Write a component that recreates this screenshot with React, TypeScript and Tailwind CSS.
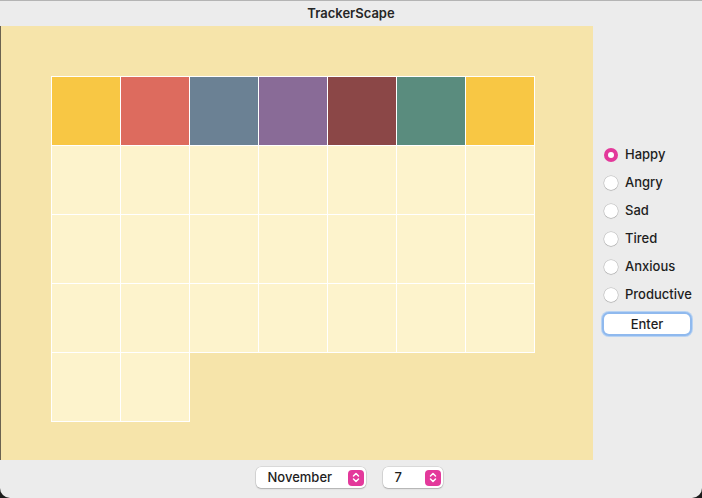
import React from "react";

// TrackerScape — mood tracker window (month grid + mood picker)

const topColors = ["#f8c744", "#dd6b5e", "#6b8194", "#896b97", "#8b4747", "#5a8c7e", "#f8c744"];
const moods = ["Happy", "Angry", "Sad", "Tired", "Anxious", "Productive"];

function Stepper() {
  return (
    <span className="flex items-center justify-center w-[16px] h-[16px] rounded-[4px] bg-[#e3399b]">
      <svg width="8" height="11" viewBox="0 0 8 11" fill="none" stroke="white" strokeWidth="1.5" strokeLinecap="round" strokeLinejoin="round">
        <path d="M1.5 4L4 1.5L6.5 4" />
        <path d="M1.5 7L4 9.5L6.5 7" />
      </svg>
    </span>
  );
}

function Select({ value, width }: { value: string; width: string }) {
  return (
    <div
      className={`${width} h-[21px] flex items-center justify-between pl-[12px] pr-[2px] bg-white rounded-[5px] shadow-[0_0_0_0.5px_rgba(0,0,0,0.15),0_1px_1.5px_rgba(0,0,0,0.2)] text-[13px] font-medium text-[#1e1e1e]`}
    >
      <span>{value}</span>
      <Stepper />
    </div>
  );
}

export default function App() {
  const days = Array.from({ length: 30 }, (_, i) => i);

  return (
    <div className="w-[702px] h-[498px] bg-[#1c1c1c] font-['Inter','Liberation_Sans',sans-serif]">
      <div className="w-full h-full flex flex-col bg-[#ececec] rounded-b-[10px] overflow-hidden">
        {/* Title bar */}
        <div className="h-[26px] shrink-0 border-t border-[#b4b4b4] flex items-center justify-center text-[13px] font-semibold text-[#262626]">
          TrackerScape
        </div>

        <div className="flex flex-1 min-h-0">
          {/* Calendar panel */}
          <div className="w-[593px] h-[434px] bg-[#f6e4aa] border-l border-[#6b6250] pl-[50px] pt-[50px]">
            <div className="grid grid-cols-[repeat(7,69px)] w-max border-l border-t border-white">
              {days.map((d) => (
                <div
                  key={d}
                  className="h-[69px] border-r border-b border-white"
                  style={{ backgroundColor: d < 7 ? topColors[d] : "#fdf3cc" }}
                />
              ))}
            </div>
          </div>

          {/* Mood picker */}
          <div className="flex-1 flex flex-col pl-[11px] pt-[115px]">
            {moods.map((m, i) => (
              <div key={m} className="h-[28px] flex items-center gap-[7px] text-[13px] font-medium text-[#1e1e1e]">
                {i === 0 ? (
                  <span className="w-[14px] h-[14px] rounded-full bg-[#e3399b] flex items-center justify-center">
                    <span className="w-[6px] h-[6px] rounded-full bg-white" />
                  </span>
                ) : (
                  <span className="w-[14px] h-[14px] rounded-full bg-white shadow-[0_0_0_0.5px_rgba(0,0,0,0.2),0_0.5px_1px_rgba(0,0,0,0.2)]" />
                )}
                <span>{m}</span>
              </div>
            ))}
            <button className="mt-[5px] w-[86px] h-[20px] rounded-[5px] bg-white text-[13px] font-medium text-[#1e1e1e] leading-none shadow-[0_0_0_2px_#8fb9ee,0_0_0_3px_#b8d3f3]">
              Enter
            </button>
          </div>
        </div>

        {/* Bottom selects */}
        <div className="h-[38px] shrink-0 flex items-center justify-center gap-[17px] pr-[4px] pb-[3px]">
          <Select value="November" width="w-[110px]" />
          <Select value="7" width="w-[60px]" />
        </div>
      </div>
    </div>
  );
}
